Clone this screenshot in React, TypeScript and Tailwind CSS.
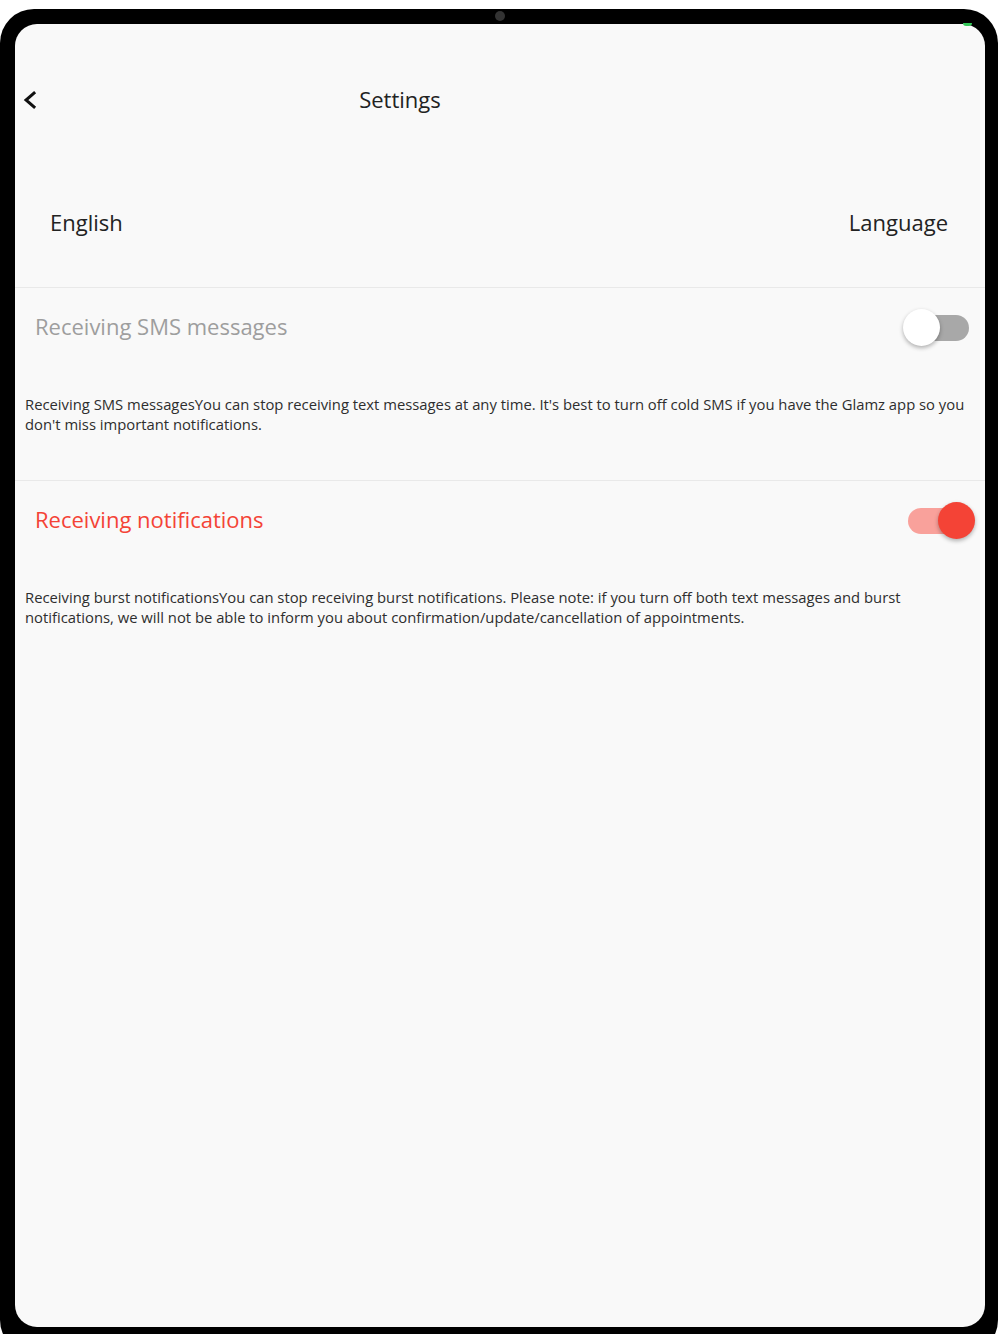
import React from "react";

function Toggle({ on }: { on: boolean }) {
  return (
    <div
      className={
        "relative w-[61px] h-[26px] rounded-full " +
        (on ? "bg-[#f9a19b]" : "bg-[#a8a8a8]")
      }
    >
      <div
        className={
          "absolute top-[-6px] w-[37px] h-[37px] rounded-full shadow-[0_2px_4px_rgba(0,0,0,0.3)] " +
          (on ? "left-[30px] bg-[#f44336]" : "left-[-5px] bg-white")
        }
      />
    </div>
  );
}

function Section({
  title,
  titleClass,
  on,
  desc,
  border,
}: {
  title: string;
  titleClass: string;
  on: boolean;
  desc: string;
  border: boolean;
}) {
  return (
    <div className={(border ? "border-b border-[#e9e9e9] " : "") + "pb-[46px]"}>
      <div className="flex items-center justify-between h-[79px] pl-[20px] pr-[16px]">
        <span className={"text-[22px] leading-[30px] font-medium -mt-[3px] " + titleClass}>{title}</span>
        <Toggle on={on} />
      </div>
      <p className="mt-[27px] px-[10px] text-[14.8px] leading-[20px] text-[#2e2e2e]">{desc}</p>
    </div>
  );
}

export default function App() {
  return (
    <div
      className="relative w-[1000px] h-[1334px] bg-white overflow-hidden"
      style={{ fontFamily: "'Open Sans', 'Noto Sans', sans-serif" }}
    >
      <div className="mt-[9px] w-[998px] h-[1345px] rounded-[34px] bg-black pt-[15px] pl-[15px] pr-[13px]">
        <div className="w-[970px] h-[1303px] rounded-[22px] bg-[#f9f9f9] overflow-hidden">
          {/* header */}
          <div className="flex items-center h-[152px]">
            <svg
              width="14"
              height="20"
              viewBox="0 0 14 20"
              className="ml-[8px]"
              fill="none"
              stroke="#111"
              strokeWidth="3"
              strokeLinecap="square"
            >
              <polyline points="11,3 3,10 11,17" />
            </svg>
            <div className="w-[726px] text-center text-[22px] leading-[30px] font-medium -mt-[2px] text-[#222]">Settings</div>
          </div>
          {/* language */}
          <div className="flex justify-between items-start h-[112px] pt-[31px] pl-[35px] pr-[37px] border-b border-[#e9e9e9]">
            <span className="text-[22px] leading-[30px] font-medium text-[#222]">English</span>
            <span className="text-[22px] leading-[30px] font-medium text-[#222]">Language</span>
          </div>
          <Section
            title="Receiving SMS messages"
            titleClass="text-[#9e9e9e]"
            on={false}
            border={true}
            desc="Receiving SMS messagesYou can stop receiving text messages at any time. It's best to turn off cold SMS if you have the Glamz app so you don't miss important notifications."
          />
          <Section
            title="Receiving notifications"
            titleClass="text-[#f44336]"
            on={true}
            border={false}
            desc="Receiving burst notificationsYou can stop receiving burst notifications. Please note: if you turn off both text messages and burst notifications, we will not be able to inform you about confirmation/update/cancellation of appointments."
          />
        </div>
      </div>
      {/* camera */}
      <div className="absolute left-[495px] top-[11px] w-[10px] h-[10px] rounded-full bg-[#333]" />
      {/* status indicator */}
      <div className="absolute left-[963px] top-[23px] w-[9px] h-[3px] rounded-b-full bg-[#34c759]" />
    </div>
  );
}
